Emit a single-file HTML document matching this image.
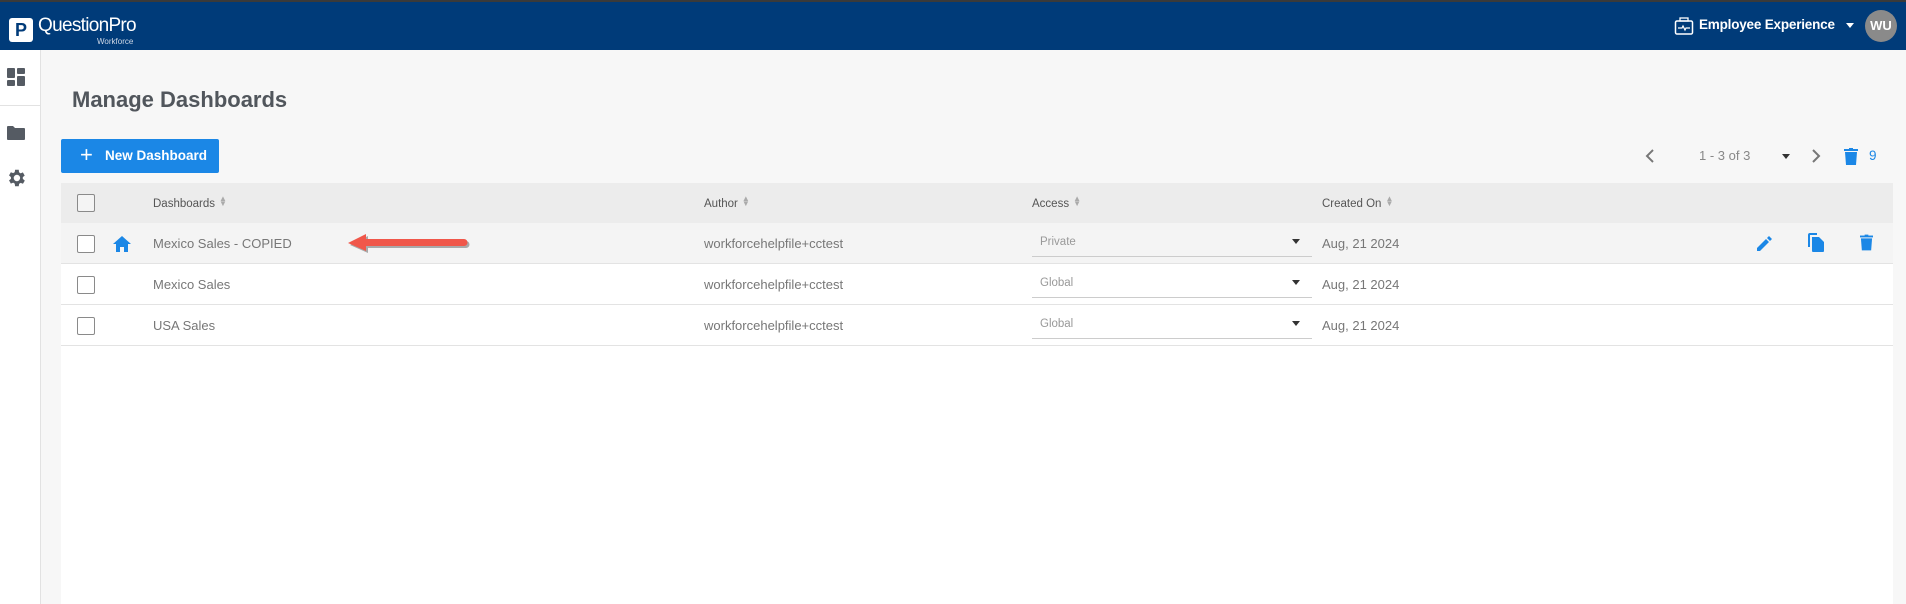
<!DOCTYPE html>
<html><head><meta charset="utf-8"><style>
*{box-sizing:border-box;margin:0;padding:0}
body{width:1906px;height:604px;overflow:hidden;background:#f7f7f7;font-family:"Liberation Sans",sans-serif;position:relative}
.top{position:absolute;left:0;top:0;width:1906px;height:50px;background:#003b79;border-top:2px solid #3a3a3a}
.side{position:absolute;left:0;top:50px;width:41px;height:554px;background:#fff;border-right:1px solid #e2e2e2}
.abs{position:absolute}
.panel{position:absolute;left:61px;top:183px;width:1832px;height:421px;background:#fff}
.row{position:absolute;left:0;width:1832px;height:41px;border-bottom:1px solid #e3e3e3}
.cb{position:absolute;left:16px;top:12px;width:18px;height:18px;border:1.5px solid #8a8a8a;border-radius:2px;background:#fff}
.t{position:absolute;font-size:13px;color:#777;top:13px}
.h{position:absolute;font-size:11.5px;color:#555;top:13px}
.sort{display:inline-block;margin-left:4px;color:#aaa;font-size:8px;line-height:5px;vertical-align:1px}
.dd{position:absolute;left:971px;top:0;width:280px;height:34px;border-bottom:1px solid #ccc}
.dd span{position:absolute;left:8px;top:13px;font-size:11.5px;color:#999}
.dd i{position:absolute;right:12px;top:16px;border-left:4px solid transparent;border-right:4px solid transparent;border-top:5px solid #333}
</style></head><body>
<div class="top">
  <div class="abs" style="left:9px;top:16px;width:24px;height:24px;background:#fff;border-radius:3px"></div>
  <div class="abs" style="left:15px;top:18px;font:bold 18px 'Liberation Sans',sans-serif;color:#003b79">P</div>
  <div class="abs" style="left:38px;top:13px;font-size:19px;color:#fff;letter-spacing:-0.7px">QuestionPro</div>
  <div class="abs" style="left:97px;top:35px;font-size:8px;color:#cfd8e6">Workforce</div>
  <svg class="abs" style="left:1674px;top:14px" width="20" height="20" viewBox="0 0 20 20"><rect x="1.5" y="5" width="17" height="13" rx="1.5" fill="none" stroke="#fff" stroke-width="1.5"/><rect x="6" y="2" width="8" height="3" fill="none" stroke="#fff" stroke-width="1.3"/><path d="M4 12h4l1-2 2 4 1-2h4" fill="none" stroke="#fff" stroke-width="1.2"/></svg>
  <div class="abs" style="left:1699px;top:15px;font-size:13.5px;font-weight:bold;color:#fff;letter-spacing:-0.2px">Employee Experience</div>
  <div class="abs" style="left:1846px;top:21px;border-left:4px solid transparent;border-right:4px solid transparent;border-top:5px solid #fff"></div>
  <div class="abs" style="left:1865px;top:8px;width:32px;height:32px;border-radius:50%;background:#8a8a8a;color:#fff;font-size:13px;font-weight:bold;text-align:center;line-height:32px">WU</div>
</div>
<div class="side">
  <svg class="abs" style="left:7px;top:18px" width="18" height="18" viewBox="0 0 18 18" fill="#555b63"><rect x="0" y="0" width="8" height="10" rx="1"/><rect x="10" y="0" width="8" height="6" rx="1"/><rect x="0" y="12" width="8" height="6" rx="1"/><rect x="10" y="8" width="8" height="10" rx="1"/></svg>
  <div class="abs" style="left:0;top:55px;width:40px;height:1px;background:#e2e2e2"></div>
  <svg class="abs" style="left:7px;top:75px" width="18" height="16" viewBox="0 0 18 16" fill="#555b63"><path d="M0 2a1 1 0 011-1h5l2 2h9a1 1 0 011 1v10a1 1 0 01-1 1H1a1 1 0 01-1-1z"/></svg>
  <svg class="abs" style="left:5px;top:117px" width="22" height="22" viewBox="0 0 24 24" fill="#555b63"><path d="M19.4 13a7.5 7.5 0 000-2l2.1-1.6-2-3.5-2.5 1a7.3 7.3 0 00-1.7-1L15 3h-4l-.4 2.7a7.3 7.3 0 00-1.7 1l-2.5-1-2 3.5L6.5 11a7.5 7.5 0 000 2l-2.1 1.6 2 3.5 2.5-1a7.3 7.3 0 001.7 1L11 21h4l.4-2.7a7.3 7.3 0 001.7-1l2.5 1 2-3.5zM13 15.5a3.5 3.5 0 110-7 3.5 3.5 0 010 7z"/></svg>
</div>
<div class="abs" style="left:72px;top:87px;font-size:22px;font-weight:bold;color:#51565c">Manage Dashboards</div>
<div class="abs" style="left:61px;top:139px;width:158px;height:34px;background:#1b87e6;border-radius:2px;color:#fff;font-size:13.5px;font-weight:bold">
  <span class="abs" style="left:19px;top:3px;font-size:22px;font-weight:normal">+</span><span class="abs" style="left:44px;top:9px">New Dashboard</span></div>
<svg class="abs" style="left:1645px;top:149px" width="10" height="14" viewBox="0 0 10 14"><path d="M8 1L2 7l6 6" fill="none" stroke="#777" stroke-width="2"/></svg>
<div class="abs" style="left:1699px;top:148px;font-size:13px;color:#888">1 - 3 of 3</div>
<div class="abs" style="left:1782px;top:154px;border-left:4px solid transparent;border-right:4px solid transparent;border-top:5px solid #333"></div>
<svg class="abs" style="left:1811px;top:149px" width="10" height="14" viewBox="0 0 10 14"><path d="M2 1l6 6-6 6" fill="none" stroke="#777" stroke-width="2"/></svg>
<svg class="abs" style="left:1844px;top:148px" width="14" height="17" viewBox="0 0 14 17" fill="#1b87e6"><rect x="0" y="1" width="14" height="2"/><rect x="5" y="0" width="4" height="2"/><path d="M1 4h12l-1 13H2z"/></svg>
<div class="abs" style="left:1869px;top:148px;font-size:13.5px;color:#1b87e6">9</div>
<div class="panel">
  <div class="row" style="top:0;height:40px;background:#ececec;border-bottom:none">
    <div class="cb" style="top:11px;background:#f4f4f4"></div>
    <div class="h" style="left:92px">Dashboards<span class="sort">▲<br>▼</span></div>
    <div class="h" style="left:643px">Author<span class="sort">▲<br>▼</span></div>
    <div class="h" style="left:971px">Access<span class="sort">▲<br>▼</span></div>
    <div class="h" style="left:1261px">Created On<span class="sort">▲<br>▼</span></div>
  </div>
  <div class="row" style="top:40px;background:#f4f4f4">
    <div class="cb"></div>
    <svg class="abs" style="left:52px;top:13px" width="18" height="16" viewBox="0 0 18 16" fill="#1b87e6"><path d="M9 0L0 8h3v8h4v-5h4v5h4V8h3z"/></svg>
    <div class="t" style="left:92px">Mexico Sales - COPIED</div>
    <svg class="abs" style="left:283px;top:8px" width="130" height="24" viewBox="0 0 130 24"><path d="M4 12L22 3v5h98a3 3 0 010 7H22v5z" fill="#3a3a3a" opacity=".4" transform="translate(2,2)"/><path d="M4 12L22 3v5h98a3 3 0 010 7H22v5z" fill="#f0574a"/></svg>
    <div class="t" style="left:643px">workforcehelpfile+cctest</div>
    <div class="dd"><span>Private</span><i></i></div>
    <div class="t" style="left:1261px">Aug, 21 2024</div>
    <svg class="abs" style="left:1696px;top:12px" width="16" height="16" viewBox="0 0 16 16" fill="#1b87e6"><path d="M0 13v3h3l9-9-3-3zM13 6l2-2-3-3-2 2z"/></svg>
    <svg class="abs" style="left:1747px;top:10px" width="16" height="19" viewBox="0 0 16 19" fill="#1b87e6"><path d="M0 2a2 2 0 012-2h7v2H2v12H0z"/><path d="M4 4h7l5 5v9a1 1 0 01-1 1H5a1 1 0 01-1-1z"/></svg>
    <svg class="abs" style="left:1799px;top:11px" width="13" height="17" viewBox="0 0 14 17" fill="#1b87e6"><rect x="0" y="1" width="14" height="2"/><rect x="5" y="0" width="4" height="2"/><path d="M1 4h12l-1 13H2z"/></svg>
  </div>
  <div class="row" style="top:81px">
    <div class="cb"></div>
    <div class="t" style="left:92px">Mexico Sales</div>
    <div class="t" style="left:643px">workforcehelpfile+cctest</div>
    <div class="dd"><span>Global</span><i></i></div>
    <div class="t" style="left:1261px">Aug, 21 2024</div>
  </div>
  <div class="row" style="top:122px">
    <div class="cb"></div>
    <div class="t" style="left:92px">USA Sales</div>
    <div class="t" style="left:643px">workforcehelpfile+cctest</div>
    <div class="dd"><span>Global</span><i></i></div>
    <div class="t" style="left:1261px">Aug, 21 2024</div>
  </div>
</div>
</body></html>
